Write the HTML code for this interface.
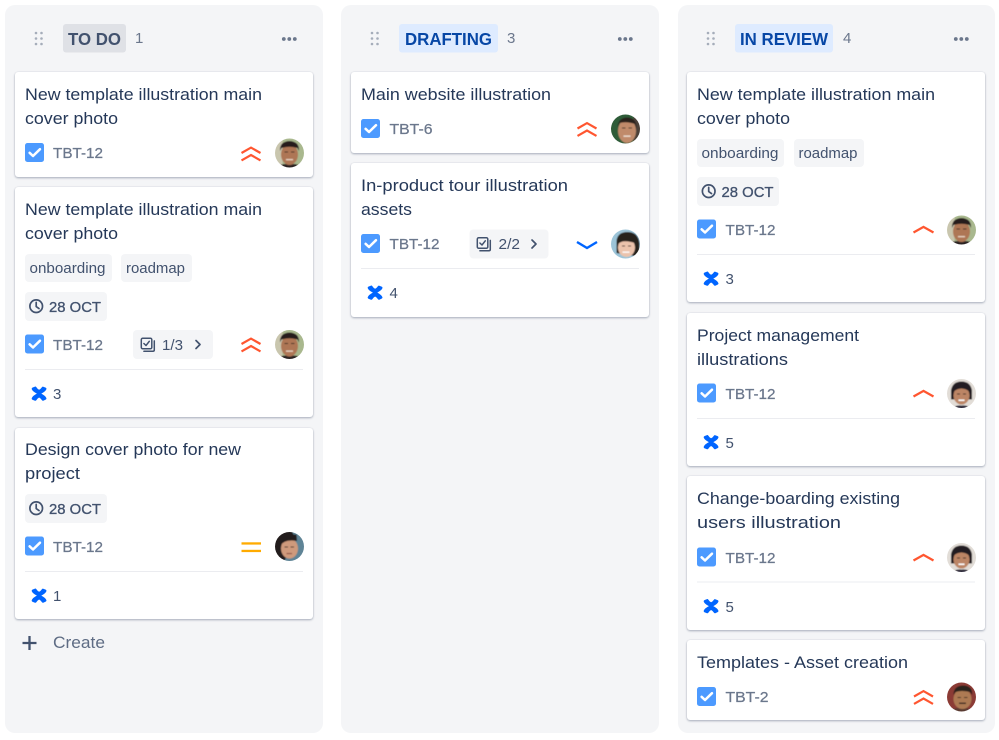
<!DOCTYPE html>
<html><head><meta charset="utf-8"><style>
html,body{margin:0;padding:0;background:#fff;width:999px;height:740px;overflow:hidden}
svg{display:block;font-family:"Liberation Sans",sans-serif}
.card{fill:#fff;filter:drop-shadow(0 1px 1px rgba(9,30,66,.3)) drop-shadow(0 0 .4px rgba(9,30,66,.12))}
.t{font-size:17px;fill:#253858}
.k{font-size:15px;fill:#6B778C;font-weight:400;stroke:#6B778C;stroke-width:.25}
.g{font-size:15px;fill:#42526E}
.d{font-size:15px;fill:#42526E;stroke:#42526E;stroke-width:.3}
.n{font-size:15px;fill:#42526E}
.chip{fill:#F4F5F7}
.div{stroke:#EBECF0;stroke-width:1}
.h{font-size:17.7px;font-weight:700}
.c{font-size:15px;fill:#6B778C}
</style></head><body>
<svg width="999" height="740" viewBox="0 0 999 740" xmlns="http://www.w3.org/2000/svg">
<defs>
<clipPath id="cp"><circle cx="0" cy="0" r="14.5"/></clipPath>
<filter id="b" x="-20%" y="-20%" width="140%" height="140%"><feGaussianBlur stdDeviation=".55"/></filter>
<g id="chk"><rect width="19" height="19" rx="2.5" fill="#4C9AFF"/><path d="M4.6 9.8 L8 13 L15 6.2" fill="none" stroke="#fff" stroke-width="2.500" stroke-linecap="round" stroke-linejoin="round"/></g>
<g id="hi" fill="none" stroke="#FF5630" stroke-width="2.200"><path d="M0.500 6 L10 0.600 L19.500 6"/><path d="M0.500 13.400 L10 8 L19.500 13.400"/></g>
<g id="up" fill="none" stroke="#FF5630" stroke-width="2.300"><path d="M0 6.500 L10 0.900 L20 6.500"/></g>
<g id="down" fill="none" stroke="#0065FF" stroke-width="2.400"><path d="M0 0.500 L10 6.500 L20 0.500"/></g>
<g id="med" fill="#FFAB00"><rect width="19.500" height="2.300" y="0"/><rect width="19.500" height="2.300" y="7.500"/></g>
<g id="conf" fill="#0065FF"><path d="M0.200 2.300 Q0 1.300 .9 .8 L3.500 -.2 Q4.300 -.4 4.800 .3 Q6.200 2.400 7.600 3 Q9 2.400 10.500 .3 Q11 -.4 11.800 -.1 L14.400 1 Q15.200 1.500 14.900 2.400 Q13.900 4.700 9.800 6.800 Q13.900 8.900 14.900 11.300 Q15.200 12.200 14.400 12.700 L11.800 13.900 Q11 14.200 10.500 13.500 Q9 11.200 7.600 10.700 Q6.200 11.200 4.800 13.500 Q4.300 14.200 3.500 13.900 L.9 12.900 Q0 12.400 .2 11.400 Q1.200 8.900 5.400 6.800 Q1.200 4.700 .2 2.300Z"/></g>
<g id="clock" fill="none" stroke="#42526E" stroke-width="1.700"><circle cx="7.200" cy="7.200" r="6.300"/><path d="M7.200 3.400 V7.600 L10 9.600" stroke-linecap="round" stroke-linejoin="round"/></g>
<g id="sub" fill="none" stroke="#42526E" stroke-width="1.500"><rect x=".8" y=".8" width="10.500" height="10.500" rx="1.400"/><path d="M3.400 6 L5.500 8 L8.800 3.800" stroke-linecap="round" stroke-linejoin="round"/><path d="M13.800 3.400 V12.400 Q13.800 13.800 12.400 13.800 H3.400" stroke-linecap="round"/></g>
<g id="chev" fill="none" stroke="#42526E" stroke-width="1.700"><path d="M0 0 L4 4 L0 8" stroke-linecap="round" stroke-linejoin="round"/></g>
<g id="a1" clip-path="url(#cp)"><g filter="url(#b)"><circle r="16" fill="#A9B88E"/><path d="M-16 -16 H-7 V16 H-16Z" fill="#C9C6AE"/><path d="M-15 16 Q-10 10 0 11 Q10 10 15 16Z" fill="#2B2320"/><ellipse cx="0" cy="1.500" rx="8.500" ry="10.500" fill="#AE7655"/><path d="M-9.500 -2 Q-10 -11.500 0 -12 Q10 -11.500 9.500 -2 L8 -5 Q0 -7.500 -8 -5Z" fill="#251D1B"/><rect x="-5" y="-1.500" width="3.500" height="1" fill="#3A2A22"/><rect x="1.500" y="-1.500" width="3.500" height="1" fill="#3A2A22"/><rect x="-3.500" y="6" width="7" height="1.300" fill="#E8D4C4"/></g></g>
<g id="a2" clip-path="url(#cp)"><g filter="url(#b)"><circle r="16" fill="#2D5B38"/><path d="M8 -16 H16 V16 H8Z" fill="#4B4038"/><ellipse cx="1.500" cy="2" rx="9" ry="12" fill="#C08A6A"/><path d="M-8 -2 Q-7 -11.500 2 -11.500 Q11.500 -11 11 0 L9.500 -5 Q1 -8 -6 -6Z" fill="#2A201C"/><rect x="-3.500" y="-1.500" width="3.500" height="1" fill="#3A2A22"/><rect x="3" y="-1.500" width="3.500" height="1" fill="#3A2A22"/><rect x="-2" y="6.500" width="7" height="1.300" fill="#F0E2D6"/></g></g>
<g id="a3" clip-path="url(#cp)"><g filter="url(#b)"><circle r="16" fill="#9CC4D8"/><path d="M-9 9 V-3 Q-8 -12 2 -12 Q13 -12 14 0 V12 H9Z" fill="#26201F"/><ellipse cx="1" cy="3.500" rx="8.500" ry="9.500" fill="#EBC3AC"/><path d="M-7.500 0 Q-3 -5 9.500 -1 L9.500 -8 L-6 -8Z" fill="#26201F"/><rect x="-3" y="7.500" width="7" height="1.300" fill="#fff"/><rect x="-3.500" y="1.500" width="3" height="1" fill="#3A2A25"/><rect x="2.500" y="1.500" width="3" height="1" fill="#3A2A25"/></g></g>
<g id="a4" clip-path="url(#cp)"><g filter="url(#b)"><circle r="16" fill="#E2DDD7"/><path d="M-10.500 6 V-3 Q-9 -12 0 -12 Q9 -12 10.500 -3 V6Z" fill="#221C20"/><ellipse cx="0" cy="2" rx="8" ry="9" fill="#BC8565"/><path d="M-8 -2 Q0 -8 8 -2 L8 -8 L-8 -8Z" fill="#221C20"/><path d="M-10 16 Q-6 11 0 12 Q6 11 10 16Z" fill="#2D2A3A"/><rect x="-4.500" y="0" width="3" height="1" fill="#3A2A22"/><rect x="1.500" y="0" width="3" height="1" fill="#3A2A22"/><rect x="-3" y="6" width="6" height="1.500" fill="#FFF"/></g></g>
<g id="a5" clip-path="url(#cp)"><g filter="url(#b)"><circle r="16" fill="#5E8496"/><path d="M-16 16 V-16 H2 L6 -8 L-6 16Z" fill="#231B1B"/><ellipse cx="0" cy="2" rx="8.500" ry="10" fill="#CF9A7C"/><path d="M-9 -1 Q-5 -7.500 7.500 -5.500 L7 -12 L-9 -12Z" fill="#231B1B"/><rect x="-5" y="0" width="3.500" height="1" fill="#3A2A22"/><rect x="1" y="0" width="3.500" height="1" fill="#3A2A22"/><rect x="-3" y="6.500" width="5.500" height="1.100" fill="#8C4F42"/></g></g>
<g id="a6" clip-path="url(#cp)"><g filter="url(#b)"><circle r="16" fill="#8B3A34"/><path d="M-15 16 Q-8 10 0 11 Q9 10 15 16Z" fill="#5A3A30"/><ellipse cx="1" cy="2" rx="9" ry="10" fill="#AD7A52"/><path d="M-8 -2 Q-8 -11.500 2 -11.500 Q11.500 -11 10.500 -2 L8.500 -5 Q0 -7 -6 -5Z" fill="#2C211C"/><rect x="-4" y="0" width="3.500" height="1" fill="#3A2A22"/><rect x="2.500" y="0" width="3.500" height="1" fill="#3A2A22"/><rect x="-2.500" y="5.500" width="7" height="1.500" fill="#3A2A20"/></g></g>
</defs>

<rect x="5" y="5" width="318" height="728" rx="10" fill="#F4F5F7"/>
<rect x="341" y="5" width="318" height="728" rx="10" fill="#F4F5F7"/>
<rect x="678" y="5" width="317" height="728" rx="10" fill="#F4F5F7"/>

<!-- headers -->
<g fill="#A5ADBA"><circle cx="36" cy="33" r="1.300"/><circle cx="41.500" cy="33" r="1.300"/><circle cx="36" cy="38.500" r="1.300"/><circle cx="41.500" cy="38.500" r="1.300"/><circle cx="36" cy="44" r="1.300"/><circle cx="41.500" cy="44" r="1.300"/>
<circle cx="372" cy="33" r="1.300"/><circle cx="377.500" cy="33" r="1.300"/><circle cx="372" cy="38.500" r="1.300"/><circle cx="377.500" cy="38.500" r="1.300"/><circle cx="372" cy="44" r="1.300"/><circle cx="377.500" cy="44" r="1.300"/>
<circle cx="708" cy="33" r="1.300"/><circle cx="713.500" cy="33" r="1.300"/><circle cx="708" cy="38.500" r="1.300"/><circle cx="713.500" cy="38.500" r="1.300"/><circle cx="708" cy="44" r="1.300"/><circle cx="713.500" cy="44" r="1.300"/></g>
<g fill="#6B778C"><circle cx="283.800" cy="39" r="1.900"/><circle cx="289.300" cy="39" r="1.900"/><circle cx="294.800" cy="39" r="1.900"/>
<circle cx="619.800" cy="39" r="1.900"/><circle cx="625.300" cy="39" r="1.900"/><circle cx="630.800" cy="39" r="1.900"/>
<circle cx="955.800" cy="39" r="1.900"/><circle cx="961.300" cy="39" r="1.900"/><circle cx="966.800" cy="39" r="1.900"/></g>
<rect x="63" y="24" width="63" height="28.500" rx="3" fill="#DFE1E6"/>
<text x="68" y="45" class="h" fill="#42526E" textLength="53" lengthAdjust="spacingAndGlyphs">TO DO</text>
<text x="135" y="43" class="c">1</text>
<rect x="399" y="24" width="99" height="28.500" rx="3" fill="#DEEBFF"/>
<text x="405" y="45" class="h" fill="#0747A6" textLength="87" lengthAdjust="spacingAndGlyphs">DRAFTING</text>
<text x="507" y="43" class="c">3</text>
<rect x="735" y="24" width="98" height="28.500" rx="3" fill="#DEEBFF"/>
<text x="740" y="45" class="h" fill="#0747A6" textLength="88" lengthAdjust="spacingAndGlyphs">IN REVIEW</text>
<text x="843" y="43" class="c">4</text>

<!-- Column 1 -->
<rect class="card" x="15" y="72" width="298" height="105" rx="3"/>
<text class="t" x="25" y="100" textLength="237" lengthAdjust="spacingAndGlyphs">New template illustration main</text>
<text class="t" x="25" y="124" textLength="93" lengthAdjust="spacingAndGlyphs">cover photo</text>
<use href="#chk" x="25" y="143"/>
<text class="k" x="53" y="158" textLength="50" lengthAdjust="spacingAndGlyphs">TBT-12</text>
<use href="#hi" x="241" y="147"/>
<use href="#a1" x="289.500" y="153"/>

<rect class="card" x="15" y="187" width="298" height="230" rx="3"/>
<text class="t" x="25" y="215" textLength="237" lengthAdjust="spacingAndGlyphs">New template illustration main</text>
<text class="t" x="25" y="239" textLength="93" lengthAdjust="spacingAndGlyphs">cover photo</text>
<rect class="chip" x="25" y="254" width="87" height="28" rx="4"/>
<text class="g" x="29.500" y="273" textLength="76" lengthAdjust="spacingAndGlyphs">onboarding</text>
<rect class="chip" x="121" y="254" width="71" height="28" rx="4"/>
<text class="g" x="126" y="273" textLength="59" lengthAdjust="spacingAndGlyphs">roadmap</text>
<rect class="chip" x="25" y="292" width="82" height="29" rx="4"/>
<use href="#clock" x="29" y="299"/>
<text class="d" x="49" y="312" textLength="52" lengthAdjust="spacingAndGlyphs">28 OCT</text>
<use href="#chk" x="25" y="334.500"/>
<text class="k" x="53" y="350" textLength="50" lengthAdjust="spacingAndGlyphs">TBT-12</text>
<rect class="chip" x="133" y="330" width="80" height="29" rx="4"/>
<use href="#sub" x="140.500" y="337.500"/>
<text class="n" x="162" y="350" textLength="21" lengthAdjust="spacingAndGlyphs">1/3</text>
<use href="#chev" x="196" y="340.500"/>
<use href="#hi" x="241" y="338"/>
<use href="#a1" x="289.500" y="344.500"/>
<line class="div" x1="25" x2="303" y1="369.500" y2="369.500"/>
<use href="#conf" x="31.500" y="386.800"/>
<text class="n" x="53" y="399">3</text>

<rect class="card" x="15" y="428" width="298" height="191" rx="3"/>
<text class="t" x="25" y="455" textLength="216" lengthAdjust="spacingAndGlyphs">Design cover photo for new</text>
<text class="t" x="25" y="479" textLength="55" lengthAdjust="spacingAndGlyphs">project</text>
<rect class="chip" x="25" y="494" width="82" height="29" rx="4"/>
<use href="#clock" x="29" y="501"/>
<text class="d" x="49" y="514" textLength="52" lengthAdjust="spacingAndGlyphs">28 OCT</text>
<use href="#chk" x="25" y="536.500"/>
<text class="k" x="53" y="552" textLength="50" lengthAdjust="spacingAndGlyphs">TBT-12</text>
<use href="#med" x="241.500" y="542.300"/>
<use href="#a5" x="289.500" y="546.500"/>
<line class="div" x1="25" x2="303" y1="571.500" y2="571.500"/>
<use href="#conf" x="31.500" y="588.800"/>
<text class="n" x="53" y="601">1</text>

<path d="M29.500 636 V650 M22.500 643 H36.500" stroke="#42526E" stroke-width="2.300" fill="none"/>
<text x="53" y="648" font-size="17" fill="#5E6C84" textLength="52" lengthAdjust="spacingAndGlyphs">Create</text>

<!-- Column 2 -->
<rect class="card" x="351" y="72" width="298" height="81" rx="3"/>
<text class="t" x="361" y="100" textLength="190" lengthAdjust="spacingAndGlyphs">Main website illustration</text>
<use href="#chk" x="361" y="119"/>
<text class="k" x="389.500" y="134" textLength="43" lengthAdjust="spacingAndGlyphs">TBT-6</text>
<use href="#hi" x="577" y="122.500"/>
<use href="#a2" x="625.500" y="129"/>

<rect class="card" x="351" y="163" width="298" height="154" rx="3"/>
<text class="t" x="361" y="191" textLength="207" lengthAdjust="spacingAndGlyphs">In-product tour illustration</text>
<text class="t" x="361" y="215" textLength="51" lengthAdjust="spacingAndGlyphs">assets</text>
<use href="#chk" x="361" y="234"/>
<text class="k" x="389.500" y="249" textLength="50" lengthAdjust="spacingAndGlyphs">TBT-12</text>
<rect class="chip" x="469.500" y="229.500" width="79" height="29" rx="4"/>
<use href="#sub" x="476.500" y="237"/>
<text class="n" x="498.500" y="249" textLength="21.500" lengthAdjust="spacingAndGlyphs">2/2</text>
<use href="#chev" x="532" y="240"/>
<use href="#down" x="577" y="241.500"/>
<use href="#a3" x="625.500" y="244"/>
<line class="div" x1="361" x2="639" y1="268.500" y2="268.500"/>
<use href="#conf" x="367.500" y="285.800"/>
<text class="n" x="389.500" y="298">4</text>

<!-- Column 3 -->
<rect class="card" x="687" y="72" width="298" height="230" rx="3"/>
<text class="t" x="697" y="100" textLength="238" lengthAdjust="spacingAndGlyphs">New template illustration main</text>
<text class="t" x="697" y="124" textLength="93" lengthAdjust="spacingAndGlyphs">cover photo</text>
<rect class="chip" x="697" y="139" width="87" height="28" rx="4"/>
<text class="g" x="701.500" y="158" textLength="77" lengthAdjust="spacingAndGlyphs">onboarding</text>
<rect class="chip" x="794" y="139" width="70" height="28" rx="4"/>
<text class="g" x="798.500" y="158" textLength="59" lengthAdjust="spacingAndGlyphs">roadmap</text>
<rect class="chip" x="697" y="177" width="82" height="29" rx="4"/>
<use href="#clock" x="701.500" y="184"/>
<text class="d" x="721.500" y="197" textLength="52" lengthAdjust="spacingAndGlyphs">28 OCT</text>
<use href="#chk" x="697" y="219.500"/>
<text class="k" x="725.500" y="235" textLength="50" lengthAdjust="spacingAndGlyphs">TBT-12</text>
<use href="#up" x="913.500" y="226"/>
<use href="#a1" x="961.500" y="230"/>
<line class="div" x1="697" x2="975" y1="254.500" y2="254.500"/>
<use href="#conf" x="703.500" y="271.800"/>
<text class="n" x="725.500" y="284">3</text>

<rect class="card" x="687" y="313" width="298" height="153" rx="3"/>
<text class="t" x="697" y="341" textLength="162" lengthAdjust="spacingAndGlyphs">Project management</text>
<text class="t" x="697" y="365" textLength="91" lengthAdjust="spacingAndGlyphs">illustrations</text>
<use href="#chk" x="697" y="383.500"/>
<text class="k" x="725.500" y="399" textLength="50" lengthAdjust="spacingAndGlyphs">TBT-12</text>
<use href="#up" x="913.500" y="390"/>
<use href="#a4" x="961.500" y="393.500"/>
<line class="div" x1="697" x2="975" y1="418.500" y2="418.500"/>
<use href="#conf" x="703.500" y="435.300"/>
<text class="n" x="725.500" y="448">5</text>

<rect class="card" x="687" y="476" width="298" height="154" rx="3"/>
<text class="t" x="697" y="504" textLength="203" lengthAdjust="spacingAndGlyphs">Change-boarding existing</text>
<text class="t" x="697" y="528" textLength="144" lengthAdjust="spacingAndGlyphs">users illustration</text>
<use href="#chk" x="697" y="547.500"/>
<text class="k" x="725.500" y="563" textLength="50" lengthAdjust="spacingAndGlyphs">TBT-12</text>
<use href="#up" x="913.500" y="554"/>
<use href="#a4" x="961.500" y="557.500"/>
<line class="div" x1="697" x2="975" y1="582" y2="582"/>
<use href="#conf" x="703.500" y="599.300"/>
<text class="n" x="725.500" y="612">5</text>

<rect class="card" x="687" y="640" width="298" height="80" rx="3"/>
<text class="t" x="697" y="668" textLength="211" lengthAdjust="spacingAndGlyphs">Templates - Asset creation</text>
<use href="#chk" x="697" y="687"/>
<text class="k" x="725.500" y="702" textLength="43" lengthAdjust="spacingAndGlyphs">TBT-2</text>
<use href="#hi" x="913.500" y="690.500"/>
<use href="#a6" x="961.500" y="697"/>
</svg>
</body></html>
